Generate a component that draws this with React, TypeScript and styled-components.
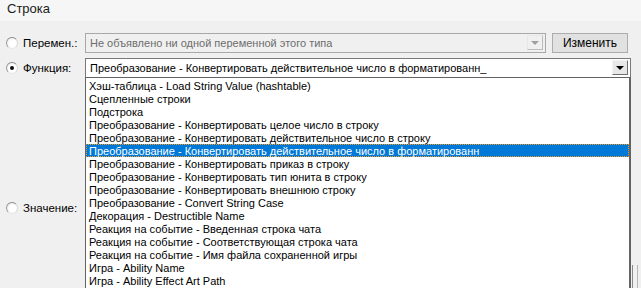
import React from "react";
import styled, { createGlobalStyle } from "styled-components";

const GlobalStyle = createGlobalStyle`
  html, body { margin: 0; padding: 0; background: #f0f0f0; }
  body { font-family: "Liberation Sans", Arial, sans-serif; }
`;

const Window = styled.div`
  position: relative;
  width: 641px;
  height: 288px;
  overflow: hidden;
  background: #f0f0f0;
  color: #000;
`;

const TitleBar = styled.div`
  height: 21px;
  box-sizing: border-box;
  padding: 1px 0 0 7px;
  background: #f6f6f6;
  font-size: 13px;
  line-height: 16px;
  color: #1a1a1a;
`;

const Body = styled.div`
  display: flex;
  flex-direction: column;
  padding: 11px 0 0 6px;
`;

const Row = styled.div<{ $gap?: number }>`
  display: flex;
  align-items: center;
  height: 21px;
  margin-top: ${(p) => p.$gap ?? 0}px;
`;

const RadioLabel = styled.label`
  display: flex;
  align-items: center;
  gap: 5px;
  width: 79px;
  flex: none;
  font-size: 11.5px;
  color: #000;
`;

const RadioCircle = styled.span<{ $checked?: boolean }>`
  position: relative;
  box-sizing: border-box;
  width: 12px;
  height: 12px;
  border-radius: 50%;
  border: 1px solid;
  border-color: #8a8a8a #d8d8d8 #e8e8e8 #9a9a9a;
  background: radial-gradient(circle at 60% 60%, #ffffff 40%, #e6e6e6 100%);
  &::after {
    content: "";
    display: ${(p) => (p.$checked ? "block" : "none")};
    position: absolute;
    left: 3px;
    top: 3px;
    width: 4px;
    height: 4px;
    border-radius: 50%;
    background: #111;
  }
`;

const Combo = styled.div<{ $disabled?: boolean; $width: number }>`
  display: flex;
  align-items: center;
  box-sizing: border-box;
  width: ${(p) => p.$width}px;
  height: 20px;
  border: 1px solid ${(p) => (p.$disabled ? "#a8a8a8" : "#7a7a7a")};
  background: ${(p) => (p.$disabled ? "#f0f0f0" : "#ffffff")};
  padding: 0 2px 0 4px;
  font-size: 11px;
  color: ${(p) => (p.$disabled ? "#6d6d6d" : "#000")};
`;

const ComboText = styled.span`
  flex: 1;
  white-space: nowrap;
  overflow: hidden;
`;

const ArrowButton = styled.span<{ $disabled?: boolean }>`
  display: flex;
  align-items: center;
  justify-content: center;
  box-sizing: border-box;
  width: 16px;
  height: 15px;
  border: 1px solid;
  border-color: ${(p) =>
    p.$disabled ? "#e8e8e8 #bcbcbc #bcbcbc #e8e8e8" : "#f4f4f4 #707070 #707070 #f4f4f4"};
  background: ${(p) => (p.$disabled ? "#f0f0f0" : "#e8e8e8")};
  &::after {
    content: "";
    border-left: 4px solid transparent;
    border-right: 4px solid transparent;
    border-top: 4px solid ${(p) => (p.$disabled ? "#a0a0a0" : "#000")};
  }
`;

const Button = styled.button`
  box-sizing: border-box;
  margin-left: 6px;
  width: 76px;
  height: 20px;
  border: 1px solid #adadad;
  background: #e1e1e1;
  font-family: "Liberation Sans", Arial, sans-serif;
  font-size: 12px;
  color: #000;
  padding: 0;
`;

const ListBox = styled.div`
  position: absolute;
  left: 85px;
  top: 77px;
  width: 546px;
  height: 230px;
  box-sizing: border-box;
  border: 1px solid #646464;
  border-right-width: 2px;
  background: #fff;
  padding-top: 1px;
`;

const Item = styled.div<{ $selected?: boolean }>`
  box-sizing: border-box;
  height: 13px;
  line-height: 12px;
  padding-left: 2px;
  font-size: 11px;
  white-space: nowrap;
  color: ${(p) => (p.$selected ? "#fff" : "#000")};
  background: ${(p) => (p.$selected ? "#0078d7" : "transparent")};
  border: 1px ${(p) => (p.$selected ? "dotted #f39a21" : "solid transparent")};
`;

const Grip = styled.div`
  position: absolute;
  left: 632px;
  top: 265px;
  width: 6px;
  height: 30px;
  box-sizing: border-box;
  border-right: 1px solid #b8b8b8;
  border-bottom: 1px solid #b8b8b8;
  border-left: 1px solid #8a8a8a;
`;

const items = [
  "Хэш-таблица - Load String Value (hashtable)",
  "Сцепленные строки",
  "Подстрока",
  "Преобразование - Конвертировать целое число в строку",
  "Преобразование - Конвертировать действительное число в строку",
  "Преобразование - Конвертировать действительное число в форматированн",
  "Преобразование - Конвертировать приказ в строку",
  "Преобразование - Конвертировать тип юнита в строку",
  "Преобразование - Конвертировать внешнюю строку",
  "Преобразование - Convert String Case",
  "Декорация - Destructible Name",
  "Реакция на событие - Введенная строка чата",
  "Реакция на событие - Соответствующая строка чата",
  "Реакция на событие - Имя файла сохраненной игры",
  "Игра - Ability Name",
  "Игра - Ability Effect Art Path",
];

export default function App() {
  return (
    <Window>
      <GlobalStyle />
      <TitleBar>Строка</TitleBar>
      <Body>
        <Row>
          <RadioLabel>
            <RadioCircle />
            Перемен.:
          </RadioLabel>
          <Combo $disabled $width={461}>
            <ComboText>Не объявлено ни одной переменной этого типа</ComboText>
            <ArrowButton $disabled />
          </Combo>
          <Button>Изменить</Button>
        </Row>
        <Row $gap={4}>
          <RadioLabel>
            <RadioCircle $checked />
            Функция:
          </RadioLabel>
          <Combo $width={546}>
            <ComboText>Преобразование - Конвертировать действительное число в форматированн_</ComboText>
            <ArrowButton />
          </Combo>
        </Row>
        <Row $gap={119}>
          <RadioLabel>
            <RadioCircle />
            Значение:
          </RadioLabel>
        </Row>
      </Body>
      <ListBox>
        {items.map((t, i) => (
          <Item key={i} $selected={i === 5}>
            {t}
          </Item>
        ))}
      </ListBox>
      <Grip />
    </Window>
  );
}
